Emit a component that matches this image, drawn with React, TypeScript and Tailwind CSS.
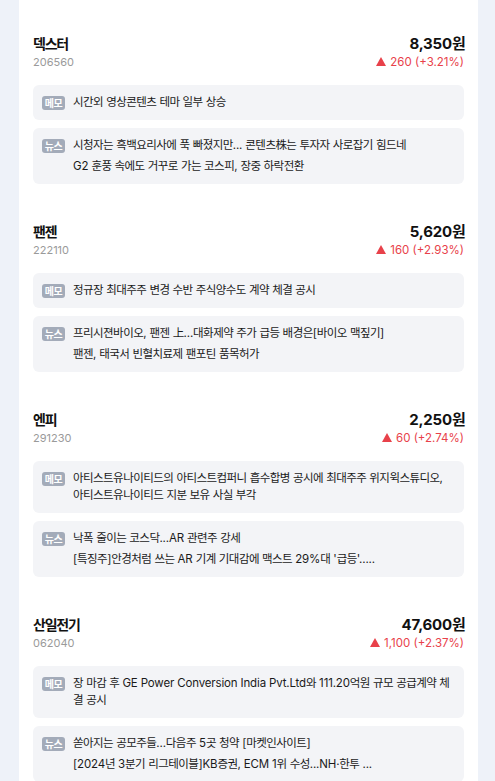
// 관심종목 메모/뉴스 리스트
import type { ReactNode } from "react";

type Stock = {
  name: string;
  code: string;
  price: string;
  change: string;
  memo: string;
  news: string[];
};

const STOCKS: Stock[] = [
  {
    name: "덱스터",
    code: "206560",
    price: "8,350원",
    change: "260 (+3.21%)",
    memo: "시간외 영상콘텐츠 테마 일부 상승",
    news: [
      "시청자는 흑백요리사에 푹 빠졌지만... 콘텐츠株는 투자자 사로잡기 힘드네",
      "G2 훈풍 속에도 거꾸로 가는 코스피, 장중 하락전환",
    ],
  },
  {
    name: "팬젠",
    code: "222110",
    price: "5,620원",
    change: "160 (+2.93%)",
    memo: "정규장 최대주주 변경 수반 주식양수도 계약 체결 공시",
    news: [
      "프리시젼바이오, 팬젠 上...대화제약 주가 급등 배경은[바이오 맥짚기]",
      "팬젠, 태국서 빈혈치료제 팬포틴 품목허가",
    ],
  },
  {
    name: "엔피",
    code: "291230",
    price: "2,250원",
    change: "60 (+2.74%)",
    memo: "아티스트유나이티드의 아티스트컴퍼니 흡수합병 공시에 최대주주 위지윅스튜디오, 아티스트유나이티드 지분 보유 사실 부각",
    news: [
      "낙폭 줄이는 코스닥...AR 관련주 강세",
      "[특징주]안경처럼 쓰는 AR 기계 기대감에 맥스트 29%대 '급등'.....",
    ],
  },
  {
    name: "산일전기",
    code: "062040",
    price: "47,600원",
    change: "1,100 (+2.37%)",
    memo: "장 마감 후 GE Power Conversion India Pvt.Ltd와 111.20억원 규모 공급계약 체결 공시",
    news: [
      "쏟아지는 공모주들...다음주 5곳 청약 [마켓인사이트]",
      "[2024년 3분기 리그테이블]KB증권, ECM 1위 수성...NH·한투 ...",
    ],
  },
];

// Noto CJK 한글은 전각이라 원본보다 넓음 → 한글 구간만 자간을 좁힌다
function Ko({ text, tight }: { text: string; tight?: boolean }): ReactNode {
  const parts = text.split(/([\uAC00-\uD7A3\u4E00-\u9FFF]+)/);
  return parts.map((p, i) =>
    i % 2 === 1 ? (
      <span
        key={i}
        className={tight ? "tracking-[-1.7px]" : "leading-none tracking-[-0.55px]"}
      >
        {p}
      </span>
    ) : (
      p
    )
  );
}

function Badge({ label }: { label: string }) {
  return (
    <span className="mt-[2px] flex h-[14px] w-[23px] shrink-0 items-center justify-center rounded-[3px] bg-[#a3abb9] text-[10px] font-bold leading-none tracking-[-0.5px] text-white">
      {label}
    </span>
  );
}

function StockBlock({ s }: { s: Stock }) {
  return (
    <section>
      <header className="flex items-start justify-between">
        <div>
          <div className="text-[14px] font-bold leading-[20px] tracking-[-1.2px] text-[#111]">
            {s.name}
          </div>
          <div className="text-[11px] leading-[16px] text-[#9a9a9a]">{s.code}</div>
        </div>
        <div className="text-right">
          <div className="text-[15px] font-bold leading-[20px] tracking-[-0.2px] text-[#111]">
            <Ko text={s.price} tight />
          </div>
          <div className="flex items-center justify-end gap-[4px] text-[11.5px] leading-[16px] text-[#e8414a]">
            <svg width="10" height="9" viewBox="0 0 10 9" className="mb-[1px]">
              <path d="M5 0 L10 9 L0 9 Z" fill="#e8414a" />
            </svg>
            <span>{s.change}</span>
          </div>
        </div>
      </header>
      <div className="mt-[15px] flex flex-col gap-[8px]">
        <div className="flex gap-[8px] rounded-[6px] bg-[#f3f4f7] px-[9px] py-[9px]">
          <Badge label="메모" />
          <p className="text-[11.5px] leading-[17px] tracking-[-0.15px] text-[#1a1a1a]">
            <Ko text={s.memo} />
          </p>
        </div>
        <div className="flex gap-[8px] rounded-[6px] bg-[#f3f4f7] px-[9px] py-[9px]">
          <Badge label="뉴스" />
          <ul className="flex flex-col gap-[4px] text-[11.5px] leading-[17px] tracking-[-0.15px] text-[#1a1a1a]">
            {s.news.map((n) => (
              <li key={n}>
                <Ko text={n} />
              </li>
            ))}
          </ul>
        </div>
      </div>
    </section>
  );
}

export default function App() {
  return (
    <div
      className="h-[781px] overflow-hidden bg-[#eef2f9]"
      style={{ fontFamily: 'Inter, "Noto Sans CJK KR", sans-serif' }}
    >
      <div className="mx-[19px] w-[459px] bg-white px-[14px] pt-[34px] pb-[20px]">
        <div className="flex flex-col gap-[38px]">
          {STOCKS.map((s) => (
            <StockBlock key={s.code} s={s} />
          ))}
        </div>
      </div>
    </div>
  );
}
